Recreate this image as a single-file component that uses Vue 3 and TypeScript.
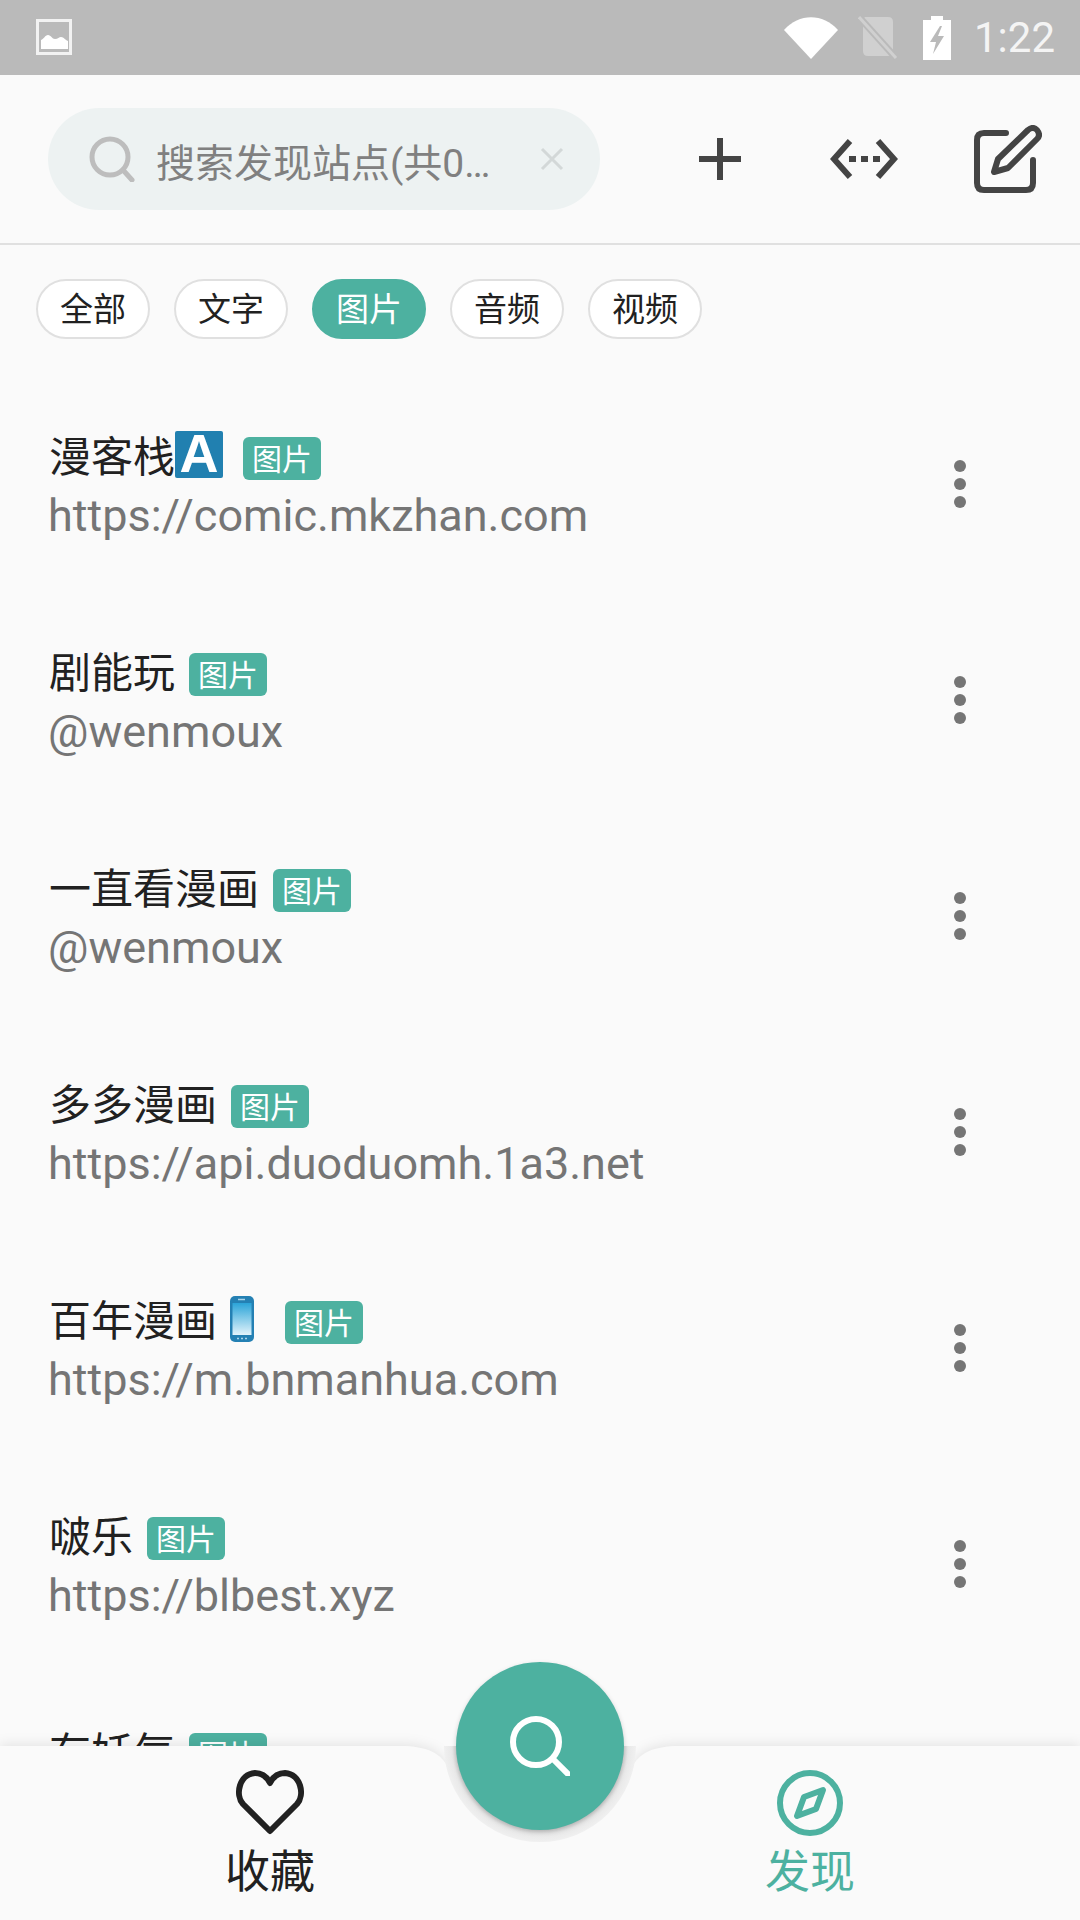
<template>
  <div class="page">
    <div class="status-bar">
      <svg class="st-image" width="36" height="36" viewBox="0 0 36 36">
        <rect x="1.5" y="1.5" width="33" height="33" fill="none" stroke="#f2f2f2" stroke-width="3" />
        <path d="M5 30V21C8 20 9 16 12 16C15 16 16 20 19 20C22 20 23 18 25 18C28 18 29 21 32 22V30Z" fill="#fff" />
      </svg>
      <span class="st-space"></span>
      <svg width="54" height="44" viewBox="0 0 54 44">
        <path d="M0 14C15 -3 39 -3 54 14L27 43Z" fill="#fff" />
      </svg>
      <svg class="st-sim" width="40" height="44" viewBox="0 0 40 44">
        <path d="M7 1H30Q35 1 35 6V35Q35 40 30 40H10Q5 40 5 35V3Z" fill="#d0d0d0" />
        <path d="M1 1L38 42" stroke="#bababa" stroke-width="7" />
        <path d="M1 1L38 42" stroke="#d0d0d0" stroke-width="3" />
      </svg>
      <svg class="st-battery" width="30" height="44" viewBox="0 0 30 44">
        <path d="M9 0H21V4H29V44H1V4H9Z" fill="#fff" />
        <path d="M18 10L8 26H14L11 38L22 20H16L20 10Z" fill="#bababa" />
      </svg>
      <span class="st-time">1:22</span>
    </div>

    <header class="top-bar">
      <div class="search-box">
        <svg width="46" height="46" viewBox="0 0 46 46" fill="none" stroke="#bdbdbd" stroke-width="5" stroke-linecap="round">
          <circle cx="21" cy="21" r="18" />
          <path d="M34 34L43 44" />
        </svg>
        <span class="search-text">搜索发现站点(共0…</span>
        <svg width="24" height="24" viewBox="0 0 24 24" stroke="#d3d8d8" stroke-width="3">
          <path d="M2 2L22 22M22 2L2 22" />
        </svg>
      </div>
      <div class="action">
        <svg width="42" height="42" viewBox="0 0 42 42" stroke="#444" stroke-width="6">
          <path d="M0 21H42M21 0V42" />
        </svg>
      </div>
      <div class="action">
        <svg width="68" height="40" viewBox="0 0 68 40" fill="none" stroke="#444" stroke-width="6">
          <path d="M20 2L4 20L20 38M48 2L64 20L48 38" />
          <path d="M19 20H50" stroke-dasharray="7 5" />
        </svg>
      </div>
      <div class="action">
        <svg width="68" height="68" viewBox="0 0 68 68" fill="none" stroke="#444" stroke-width="6" stroke-linecap="round" stroke-linejoin="round">
          <path d="M32 8H10Q3 8 3 15V58Q3 65 10 65H52Q59 65 59 58V35" />
          <path d="M20 47L24 34L54 5Q59 1 63 5Q67 10 63 14L34 43Z" />
        </svg>
      </div>
    </header>

    <div class="chips">
      <span v-for="c in chips" :key="c" class="chip" :class="{ active: c === '图片' }">{{ c }}</span>
    </div>

    <div class="list">
      <div v-for="site in sites" :key="site.name" class="item">
        <div class="item-text">
          <div class="title">
            <span class="name">{{ site.name }}</span>
            <span v-if="site.mark === 'a'" class="mark-a">A</span>
            <svg v-if="site.mark === 'phone'" class="mark-phone" width="24" height="46" viewBox="0 0 24 46">
              <defs>
                <linearGradient id="screen" x1="0" y1="0" x2="0" y2="1">
                  <stop offset="0" stop-color="#2ba4d8" />
                  <stop offset="1" stop-color="#e2f3fb" />
                </linearGradient>
              </defs>
              <rect width="24" height="46" rx="5" fill="#2480b3" />
              <rect x="2.500" y="7" width="19" height="32" fill="url(#screen)" />
              <path d="M8 3.500H15" stroke="#a8d4ea" stroke-width="1.500" />
              <path d="M7 42.500H9M11 42.500H13M15 42.500H17" stroke="#a8d4ea" stroke-width="1.500" />
            </svg>
            <span class="tag">图片</span>
          </div>
          <div class="sub">{{ site.sub }}</div>
        </div>
        <svg class="more" width="12" height="48" viewBox="0 0 12 48" fill="#757575">
          <circle cx="6" cy="6" r="6" />
          <circle cx="6" cy="24" r="6" />
          <circle cx="6" cy="42" r="6" />
        </svg>
      </div>
    </div>

    <nav class="bottom-nav">
      <svg class="nav-bg" width="1080" height="174" viewBox="0 0 1080 174">
        <path d="M0 0H400C428 0 440 8 446 18A96 96 0 0 0 634 18C640 8 652 0 680 0H1080V174H0Z" fill="#fafafa" />
      </svg>
      <div class="notch"></div>
      <div class="nav-item">
        <svg width="68" height="66" viewBox="0 0 68 66" fill="none" stroke="#212121" stroke-width="6" stroke-linejoin="round">
          <path d="M34 61L7 34C-1 25 3 4 19 3C26 3 31 7 34 13C37 7 42 3 49 3C65 4 69 25 61 34Z" />
        </svg>
        <span>收藏</span>
      </div>
      <div class="nav-item current">
        <svg width="66" height="66" viewBox="0 0 66 66" fill="none" stroke="#4db1a0" stroke-width="6" stroke-linejoin="round">
          <circle cx="33" cy="33" r="30" />
          <path d="M46 20L39 39L20 46L27 27Z" />
        </svg>
        <span>发现</span>
      </div>
      <button class="fab">
        <svg width="60" height="60" viewBox="0 0 60 60" fill="none" stroke="#fff" stroke-width="6" stroke-linecap="round">
          <circle cx="26" cy="26" r="23" />
          <path d="M44 44L58 58" />
        </svg>
      </button>
    </nav>
  </div>
</template>

<script setup lang="ts">
interface Site {
  name: string
  sub: string
  mark?: 'a' | 'phone'
}

const chips = ['全部', '文字', '图片', '音频', '视频']

const sites: Site[] = [
  { name: '漫客栈', sub: 'https://comic.mkzhan.com', mark: 'a' },
  { name: '剧能玩', sub: '@wenmoux' },
  { name: '一直看漫画', sub: '@wenmoux' },
  { name: '多多漫画', sub: 'https://api.duoduomh.1a3.net' },
  { name: '百年漫画', sub: 'https://m.bnmanhua.com', mark: 'phone' },
  { name: '啵乐', sub: 'https://blbest.xyz' },
  { name: '有妖气', sub: 'https://www.u17.com' }
]
</script>

<style>
html,
body {
  margin: 0;
  background: #fafafa;
}
</style>

<style scoped>
.page {
  position: relative;
  width: 1080px;
  height: 1920px;
  overflow: hidden;
  background: #fafafa;
  font-family: Roboto, "Noto Sans CJK SC", sans-serif;
}

.status-bar {
  height: 75px;
  display: flex;
  align-items: center;
  padding: 0 25px 0 36px;
  box-sizing: border-box;
  background: #bababa;
}

.st-image {
  margin-top: -1px;
}

.st-space {
  flex: 1;
}

.st-sim {
  margin-left: 20px;
}

.st-battery {
  margin-left: 24px;
}

.st-time {
  margin-left: 22px;
  font-size: 42px;
  color: #f4f4f4;
}

.top-bar {
  height: 170px;
  display: flex;
  align-items: center;
  padding-left: 48px;
  box-sizing: border-box;
  border-bottom: 2px solid #e0e0e0;
}

.search-box {
  width: 552px;
  height: 102px;
  margin-right: 48px;
  padding: 0 36px 0 41px;
  box-sizing: border-box;
  display: flex;
  align-items: center;
  border-radius: 51px;
  background: #edf2f2;
}

.search-text {
  flex: 1;
  margin: 2px 0 0 21px;
  font-size: 39px;
  color: #808080;
  white-space: nowrap;
}

.action {
  width: 144px;
  display: flex;
  justify-content: center;
}

.chips {
  display: flex;
  gap: 24px;
  padding: 34px 0 0 36px;
}

.chip {
  width: 114px;
  height: 60px;
  padding-bottom: 4px;
  box-sizing: border-box;
  display: flex;
  align-items: center;
  justify-content: center;
  border: 2px solid #e0e0e0;
  border-radius: 30px;
  background: #fff;
  font-size: 33px;
  color: #212121;
}

.chip.active {
  border-color: #4db1a0;
  background: #4db1a0;
  color: #fff;
}

.list {
  margin-top: 39px;
}

.item {
  height: 216px;
  display: flex;
  align-items: center;
  padding: 0 114px 0 48px;
}

.item-text {
  flex: 1;
}

.title {
  display: flex;
  align-items: center;
  height: 60px;
  font-size: 42px;
  color: #212121;
}

.name {
  margin: -6px 0 0 1px;
}

.mark-a {
  width: 48px;
  height: 47px;
  margin: -4px 6px 0 0;
  padding-bottom: 1px;
  box-sizing: border-box;
  display: flex;
  align-items: center;
  justify-content: center;
  border-radius: 2px;
  background: #2180b0;
  color: #fff;
  font-family: "Liberation Sans", sans-serif;
  font-size: 54px;
  font-weight: 700;
  line-height: 47px;
}

.mark-phone {
  margin: -2px 17px 0 13px;
}

.tag {
  width: 78px;
  height: 43px;
  margin: 4px 0 0 14px;
  padding-bottom: 2px;
  box-sizing: border-box;
  display: flex;
  align-items: center;
  justify-content: center;
  border-radius: 6px;
  background: #4db1a0;
  color: #fff;
  font-size: 30px;
}

.sub {
  height: 60px;
  line-height: 60px;
  font-size: 45px;
  color: #757575;
  white-space: nowrap;
}

.more {
  margin-top: -4px;
}

.bottom-nav {
  position: absolute;
  left: 0;
  bottom: 0;
  width: 1080px;
  height: 174px;
  display: grid;
  grid-template-columns: 1fr 1fr;
}

.nav-bg {
  position: absolute;
  left: 0;
  top: 0;
  overflow: visible;
  filter: drop-shadow(0 -2px 6px rgba(0, 0, 0, 0.09));
}

.notch {
  position: absolute;
  left: 444px;
  top: -96px;
  width: 192px;
  height: 192px;
  border-radius: 50%;
  background: radial-gradient(circle, #d8d8d8 84px, #e8e8e8 88px, #f0f0f0 96px);
  clip-path: inset(96px 0 0 0);
}

.nav-item {
  position: relative;
  height: 174px;
  padding-top: 24px;
  box-sizing: border-box;
  display: flex;
  flex-direction: column;
  align-items: center;
  font-size: 45px;
  line-height: 60px;
  color: #212121;
}

.nav-item span {
  margin-top: 7px;
}

.nav-item.current {
  color: #4db1a0;
}

.fab {
  position: absolute;
  left: 456px;
  top: -84px;
  width: 168px;
  height: 168px;
  padding: 0;
  display: flex;
  align-items: center;
  justify-content: center;
  border: 0;
  border-radius: 50%;
  background: #4db1a0;
  box-shadow: 0 2px 5px rgba(0, 0, 0, 0.18);
}
</style>
